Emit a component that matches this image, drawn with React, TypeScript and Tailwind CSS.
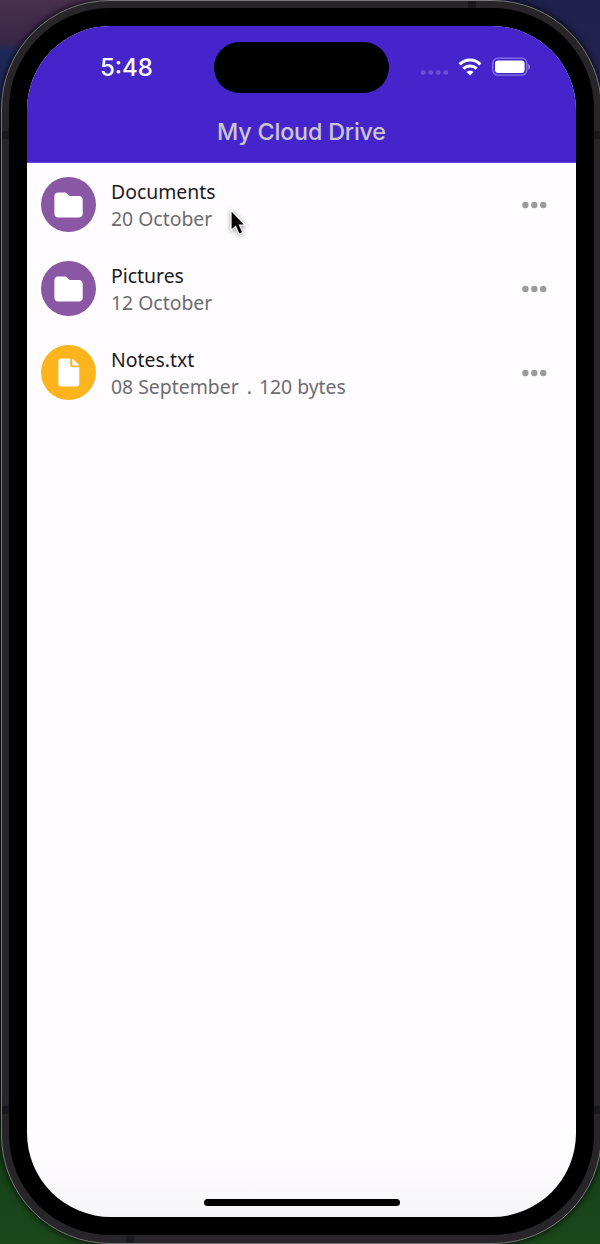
import React from "react";

type Item = { name: string; detail: string; size?: string; kind: "folder" | "file" };

const items: Item[] = [
  { name: "Documents", detail: "20 October", kind: "folder" },
  { name: "Pictures", detail: "12 October", kind: "folder" },
  { name: "Notes.txt", detail: "08 September", size: "120 bytes", kind: "file" },
];

function FolderIcon() {
  return (
    <svg width="29" height="26" viewBox="0 0 29 26" fill="#fff">
      <path d="M4 0.5H10.5C12 0.5 12.8 1.2 13.6 2L14.5 3C15 3.6 15.6 3.9 16.5 3.9H25C27 3.9 28.7 5.4 28.7 7.5V22C28.7 24 27 25.5 25 25.5H4C2 25.5 0.4 24 0.4 22V4C0.4 2 2 0.5 4 0.5Z" />
    </svg>
  );
}

function FileIcon() {
  return (
    <svg width="22" height="29" viewBox="0 0 22 29" fill="#fff">
      <path d="M3.2 0.5H12.2V6.8C12.2 8.5 13 9.3 14.6 9.3H21.3V25.4C21.3 27.2 20.2 28.4 18.4 28.4H3.2C1.4 28.4 0.4 27.2 0.4 25.4V3.5C0.4 1.7 1.4 0.5 3.2 0.5Z" />
      <path d="M14.2 0.8C14.6 0.8 15 1 15.4 1.4L20.6 6.4C21 6.8 21.2 7 21.2 7.4H15C14.5 7.4 14.2 7.2 14.2 6.7Z" />
    </svg>
  );
}

function Row({ item }: { item: Item }) {
  return (
    <li className="flex h-[84px] items-center pl-[14px] pr-[29px]">
      <span
        className={
          item.kind === "folder"
            ? "mb-px flex size-[55px] items-center justify-center rounded-full bg-[#8957a4]"
            : "mb-px flex size-[55px] items-center justify-center rounded-full bg-[#fdb41d]"
        }
      >
        {item.kind === "folder" ? <FolderIcon /> : <FileIcon />}
      </span>
      <div className="ml-[15px] flex-1 whitespace-pre text-[19.4px] leading-[27px]">
        <p className="text-[#1c1b1e]">{item.name}</p>
        <p className="flex text-[#6d6c70]">
          <span>{item.detail}</span>
          {item.size && <span className="ml-[8px]">.</span>}
          {item.size && <span className="ml-[7px]">{item.size}</span>}
        </p>
      </div>
      <svg width="25" height="8" viewBox="0 0 25 8" fill="#9b9a9d">
        <circle cx="3.4" cy="4" r="3.2" />
        <circle cx="12.3" cy="4" r="3.2" />
        <circle cx="21.2" cy="4" r="3.2" />
      </svg>
    </li>
  );
}

function StatusBar() {
  return (
    <div className="flex h-[82px] items-start">
      <time className="ml-[73px] mt-[27px] w-[114px] font-[Inter,'Liberation_Sans',sans-serif] text-[24px] font-medium leading-[29px] text-white">
        5:48
      </time>
      <div className="mt-[16px] h-[51px] w-[175px] rounded-full bg-black" />
      <svg className="ml-[32px] mt-[43px]" width="28" height="6" viewBox="0 0 28 6" fill="#6a4fd8">
        <circle cx="2.3" cy="3.5" r="2.4" />
        <circle cx="9.8" cy="3.5" r="2.4" />
        <circle cx="17.3" cy="3.5" r="2.4" />
        <circle cx="24.8" cy="3.5" r="2.4" />
      </svg>
      <svg className="ml-[9px] mt-[32px]" width="24" height="18" viewBox="0 0 24 18" fill="none" stroke="#fff" strokeWidth="3.1">
        <path d="M1.6 6.4C7.4 0.6 16.6 0.6 22.4 6.4" />
        <path d="M5.3 10.6C9 7.1 15 7.1 18.7 10.6" />
        <path d="M12 17.6L8.4 14C10.3 12.3 13.7 12.3 15.6 14Z" fill="#fff" stroke="none" />
      </svg>
      <svg className="ml-[10px] mt-[31px]" width="39" height="19" viewBox="0 0 39 19">
        <rect x="0.8" y="1.2" width="34" height="17" rx="5" fill="none" stroke="#8d79e3" strokeWidth="1.3" />
        <rect x="3" y="3.4" width="29.6" height="12.6" rx="3.2" fill="#fff" />
        <path d="M36.2 6.9C38.5 7.7 38.5 11.7 36.2 12.5Z" fill="#9685e6" />
      </svg>
    </div>
  );
}

export default function App() {
  return (
    <div className="relative h-[1244px] w-[600px] overflow-hidden bg-[linear-gradient(to_bottom,#49304f_0px,#392647_42px,#1f2858_50px,#1e2757_90px,#171719_140px,#171719_1095px,#164219_1155px,#1b471b_1244px)] font-['Noto_Sans',sans-serif]">
      <div className="absolute right-0 top-0 h-[140px] w-[300px] bg-[linear-gradient(to_bottom,#20204c,#262450_80px,#202026)]" />
      <div className="absolute left-[1px] top-0 h-[1244px] w-[601px] overflow-hidden rounded-[109px] border-[1px] border-[#77777a] bg-[#272528] px-[7px] pb-[7px] pt-[7px] shadow-[0_0_7px_#000]">
        <i className="absolute left-[466px] top-0 h-[7px] w-[8px] bg-[#19181a]" />
        <i className="absolute bottom-0 left-[124px] h-[7px] w-[8px] bg-[#1b1a1c]" />
        <i className="absolute left-0 top-[130px] h-[8px] w-[7px] bg-[#19181a]" />
        <i className="absolute right-0 top-[130px] h-[8px] w-[7px] bg-[#19181a]" />
        <i className="absolute left-0 top-[1105px] h-[8px] w-[7px] bg-[#19181a]" />
        <i className="absolute right-0 top-[1105px] h-[8px] w-[7px] bg-[#19181a]" />
        <div className="h-[1227px] w-[585px] rounded-[101px] bg-black px-[18px] pt-[18px]">
          <main className="flex h-[1191px] w-[549px] flex-col overflow-hidden rounded-[84px] bg-[linear-gradient(to_bottom,#fefcff_95%,#f6f5f7)]">
            <header className="h-[137px] border-b border-[#6943e0] bg-[#4525cb]">
              <StatusBar />
              <h1 className="pt-[8px] text-center font-[Inter,'Liberation_Sans',sans-serif] text-[23.3px] font-medium leading-[32px] tracking-[-0.18px] text-[#cbc5d0]">
                My Cloud Drive
              </h1>
            </header>
            <ul className="flex-1">
              {items.map((item) => (
                <Row key={item.name} item={item} />
              ))}
            </ul>
            <div className="mb-[11px] ml-[177px] h-[7px] w-[196px] rounded-full bg-black" />
          </main>
        </div>
      </div>
      <svg className="absolute left-[227px] top-[206px] drop-shadow-[0_1px_2px_rgba(0,0,0,0.4)]" width="21" height="31" viewBox="0 0 21 31">
        <path d="M4 4V24.5L8.6 20.4L12 28.2L15.8 26.5L12.5 19H18.2Z" fill="#000" stroke="#fff" strokeWidth="1.2" />
      </svg>
    </div>
  );
}
